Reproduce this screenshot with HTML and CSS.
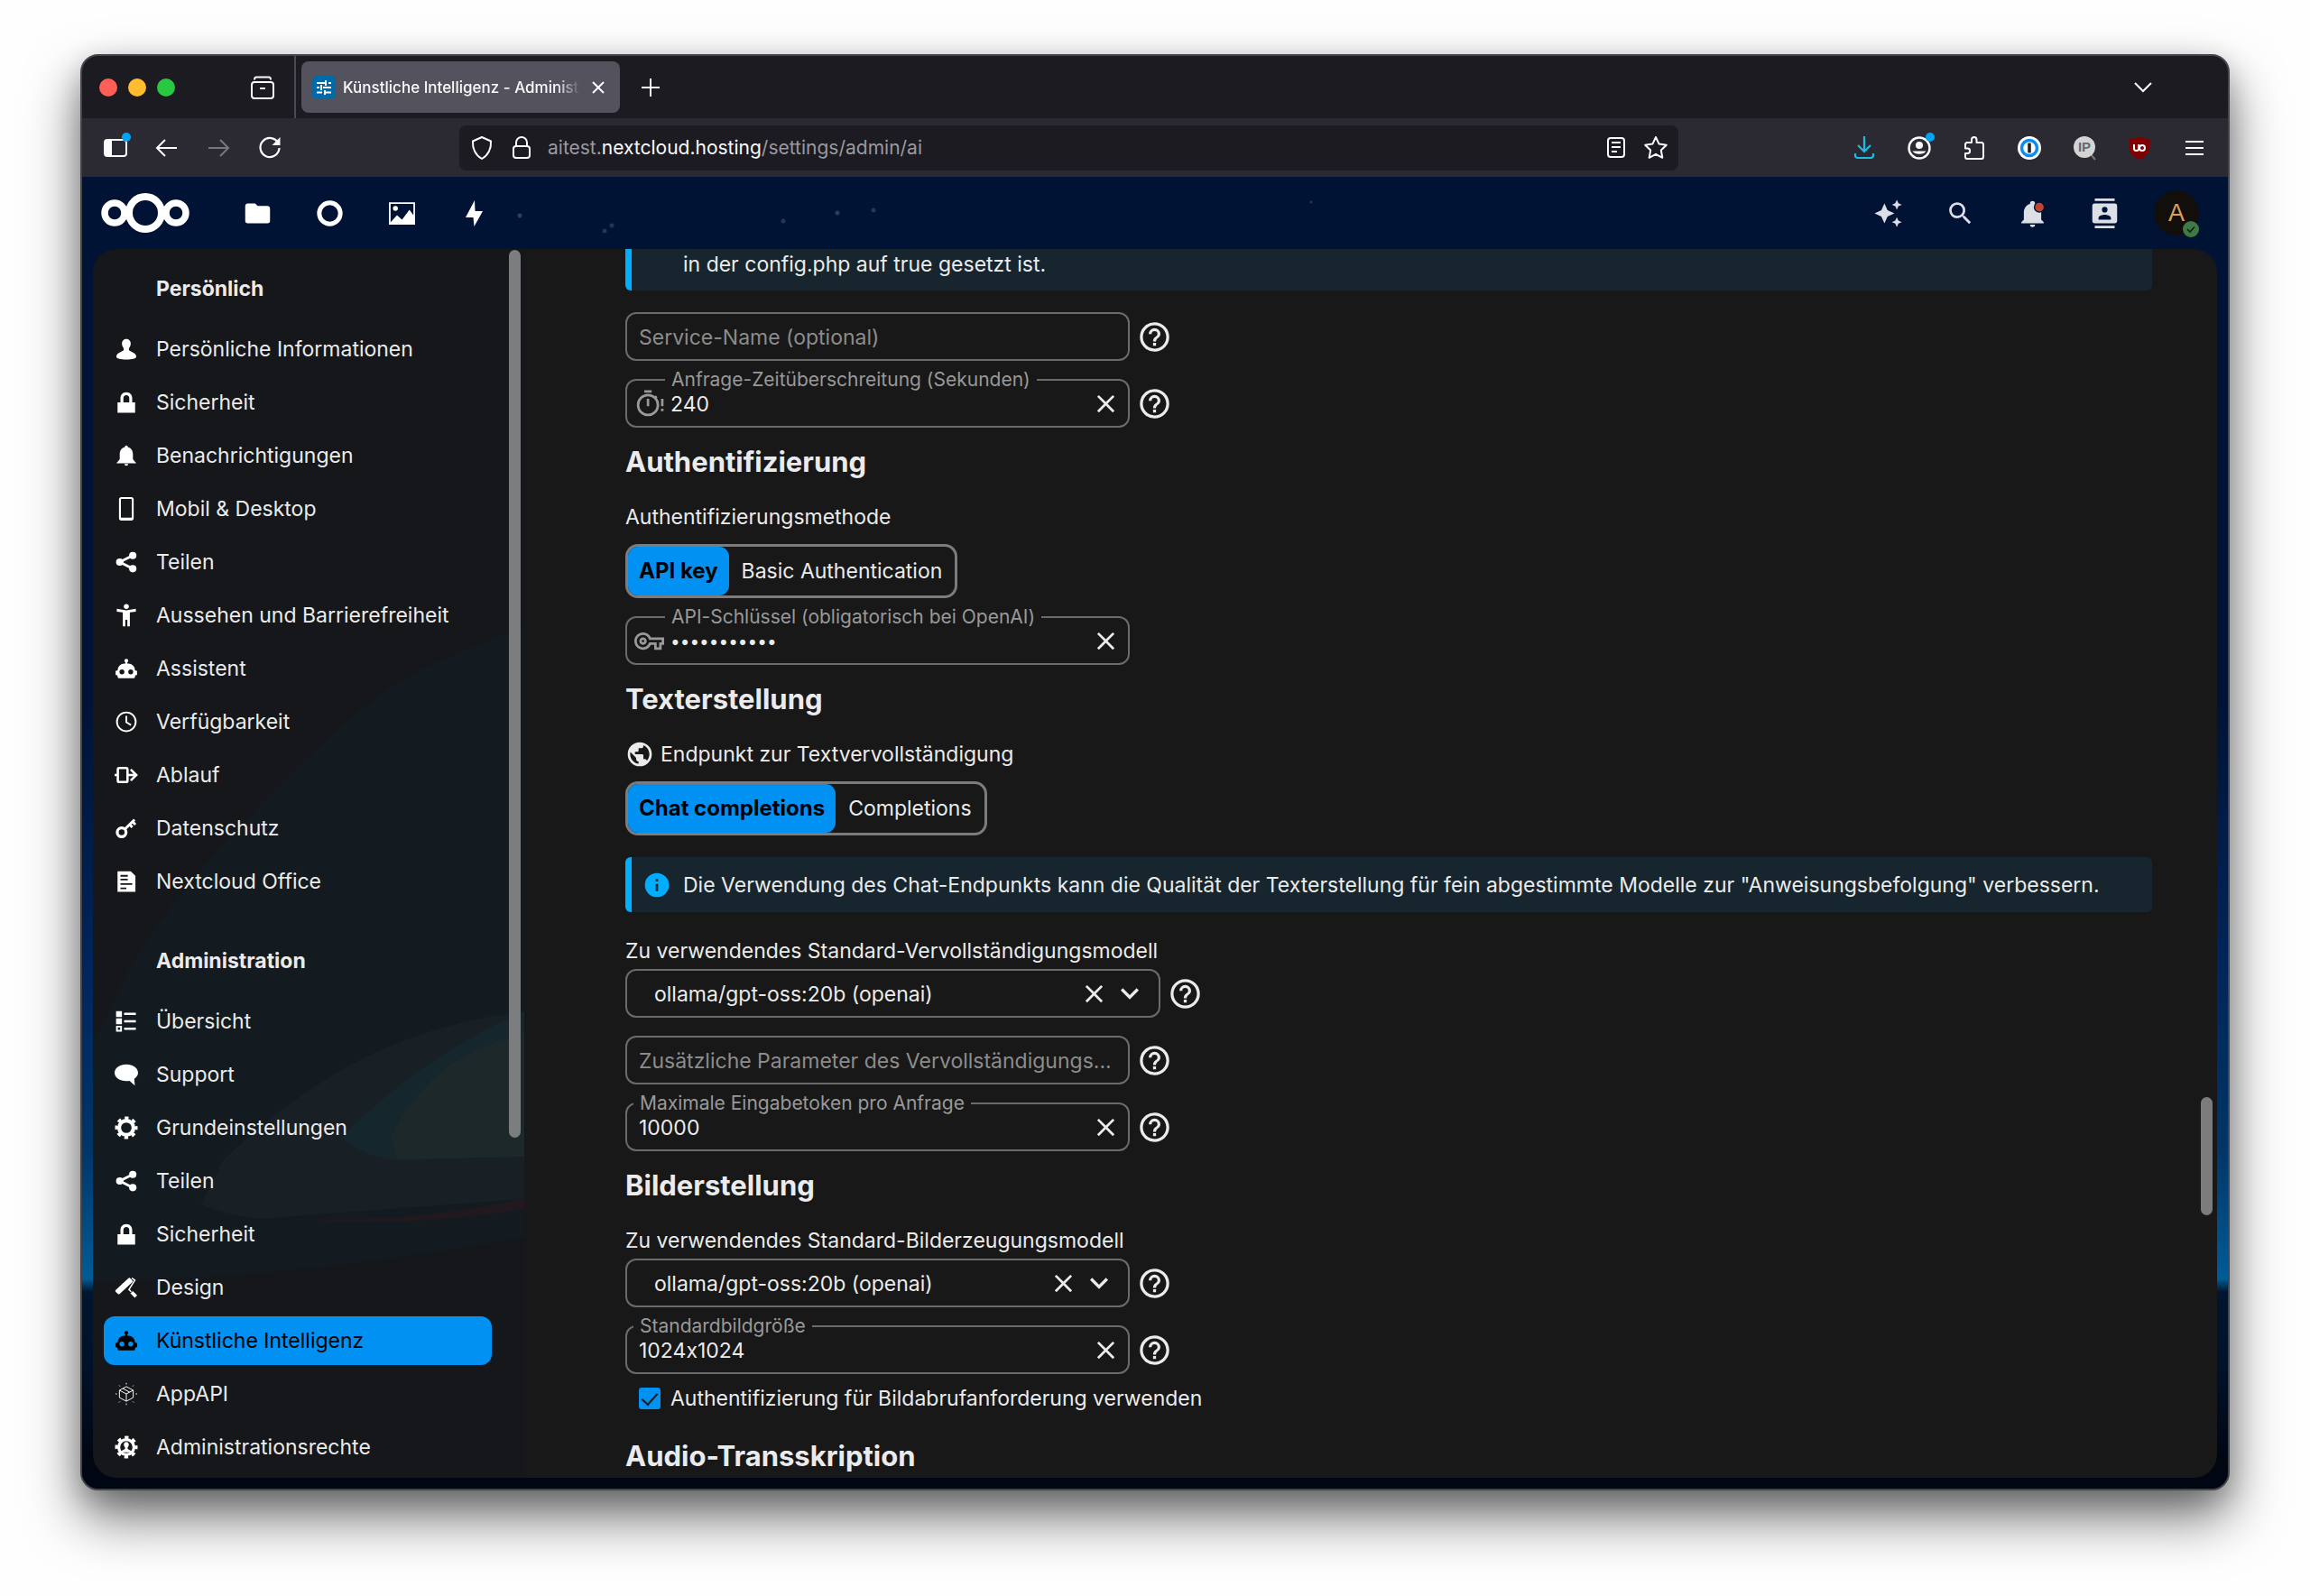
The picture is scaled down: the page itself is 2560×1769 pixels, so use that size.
FILE: index.html
```html
<!DOCTYPE html>
<html lang="de">
<head>
  <meta charset="utf-8">
  <title>Künstliche Intelligenz - Administration</title>
  <link rel="stylesheet" href="styles.css">
</head>
<body>
  <!-- Icon sprite -->
  <svg class="sprite" aria-hidden="true">
    <symbol id="i-close" viewBox="0 0 24 24"><path d="M19 6.41 17.59 5 12 10.59 6.41 5 5 6.41 10.59 12 5 17.59 6.41 19 12 13.41 17.59 19 19 17.59 13.41 12z"/></symbol>
    <symbol id="i-help" viewBox="0 0 24 24"><path d="M11 18h2v-2h-2zm1-16A10 10 0 0 0 2 12a10 10 0 0 0 10 10 10 10 0 0 0 10-10A10 10 0 0 0 12 2m0 18c-4.41 0-8-3.59-8-8s3.59-8 8-8 8 3.59 8 8-3.59 8-8 8m0-14a4 4 0 0 0-4 4h2a2 2 0 0 1 2-2 2 2 0 0 1 2 2c0 2-3 1.75-3 5h2c0-2.25 3-2.5 3-5a4 4 0 0 0-4-4"/></symbol>
    <symbol id="i-chevron" viewBox="0 0 24 24"><path d="M7.41 8.58 12 13.17l4.59-4.59L18 10l-6 6-6-6z"/></symbol>
    <symbol id="i-robot" viewBox="0 0 24 24"><path d="M12 2a2 2 0 0 1 2 2c0 .74-.4 1.39-1 1.73V7h1a7 7 0 0 1 7 7h1a1 1 0 0 1 1 1v3a1 1 0 0 1-1 1h-1v1a2 2 0 0 1-2 2H5a2 2 0 0 1-2-2v-1H2a1 1 0 0 1-1-1v-3a1 1 0 0 1 1-1h1a7 7 0 0 1 7-7h1V5.73c-.6-.34-1-.99-1-1.73a2 2 0 0 1 2-2M7.5 13A2.5 2.5 0 0 0 5 15.5 2.5 2.5 0 0 0 7.5 18a2.5 2.5 0 0 0 2.5-2.5A2.5 2.5 0 0 0 7.5 13m9 0a2.5 2.5 0 0 0-2.5 2.5 2.5 2.5 0 0 0 2.5 2.5 2.5 2.5 0 0 0 2.5-2.5 2.5 2.5 0 0 0-2.5-2.5"/></symbol>
    <symbol id="i-user" viewBox="0 0 16 16"><path d="M8 1C6.300 1 5 2.200 5 4.200c0 1.300.6 2.400 1.200 3.200v1.200C5.500 9.800 1.200 10.300 1.200 13c0 1.400 3 2 6.800 2s6.800-.6 6.800-2c0-2.700-4.300-3.200-5-4.400V7.400C10.400 6.600 11 5.500 11 4.200 11 2.200 9.700 1 8 1"/></symbol>
    <symbol id="i-lock" viewBox="0 0 16 16"><path d="M8 1C5.600 1 4 2.800 4 5v3H2v7h12V8h-2V5c0-2.200-1.600-4-4-4m0 2c1.300 0 2 .9 2 2v3H6V5c0-1.100.7-2 2-2"/></symbol>
    <symbol id="i-bell" viewBox="0 0 16 16"><path d="M8 1C7.300 1 7 1.500 7 2.100 4.900 2.600 3.500 4.400 3.500 7v3.500L1.200 13.200h13.600l-2.300-2.700V7c0-2.600-1.400-4.400-3.500-4.900C9 1.500 8.700 1 8 1M6.700 13.700a1.300 1.300 0 0 0 2.600 0"/></symbol>
    <symbol id="i-phone" viewBox="0 0 16 16"><path fill-rule="evenodd" d="M4.500 0h7c.8 0 1.500.7 1.500 1.500v13c0 .8-.7 1.500-1.500 1.500h-7C3.700 16 3 15.300 3 14.500v-13C3 .7 3.700 0 4.500 0M4.300 1.300V14h7.400V1.300z"/></symbol>
    <symbol id="i-share" viewBox="0 0 16 16"><path d="M3.500 8 12.300 3.500M3.500 8l8.800 4.500" stroke="currentColor" stroke-width="1.800"/><circle cx="3.500" cy="8" r="2.500"/><circle cx="12.400" cy="3.500" r="2.500"/><circle cx="12.400" cy="12.500" r="2.500"/></symbol>
    <symbol id="i-access" viewBox="0 0 16 16"><circle cx="8" cy="2" r="1.700"/><path d="M1.500 3.600 8 4.600l6.500-1v1.900L10.400 6v9.500H8.700V11H7.300v4.500H5.600V6l-4.100-.5z"/></symbol>
    <symbol id="i-clock" viewBox="0 0 16 16"><circle cx="8" cy="8" r="6.400" fill="none" stroke="currentColor" stroke-width="1.200"/><path d="M8 4v4.300l3.200 1.900" fill="none" stroke="currentColor" stroke-width="1.200"/></symbol>
    <symbol id="i-flow" viewBox="0 0 16 16"><path d="M2.200 4.200c0-.6.400-1 1-1h4.600c.6 0 1 .4 1 1v7.600c0 .6-.4 1-1 1H3.200c-.6 0-1-.4-1-1zM0 8h2M9 8h5.500M11 4.200 14.800 8 11 11.800" fill="none" stroke="currentColor" stroke-width="1.600"/></symbol>
    <symbol id="i-key" viewBox="0 0 16 16"><circle cx="4.800" cy="10.800" r="3" fill="none" stroke="currentColor" stroke-width="2"/><path d="m7 8.600 6.600-6.400M10.400 5.600l1.700 1.700M12.200 3.500l2 2" fill="none" stroke="currentColor" stroke-width="1.800"/></symbol>
    <symbol id="i-doc" viewBox="0 0 16 16"><path fill-rule="evenodd" d="M2 1h9l3.200 3.200V15H2zm2 2.600v1.100h5V3.600zm0 2.600v1.100h5V6.200zm0 3v1.100h8V9.200zm0 2.900v1.100h4v-1.100z"/></symbol>
    <symbol id="i-list" viewBox="0 0 16 16"><path fill-rule="evenodd" d="M1 1h4v4H1zM1 6h4v4H1zM1 11h4v4H1zm1.200 1.200v1.600h1.600v-1.600zM6.500 2.200h8v1.500h-8zM6.500 7.200h8v1.500h-8zM6.500 12.300h8v1.500h-8z"/></symbol>
    <symbol id="i-chat" viewBox="0 0 16 16"><path d="M8 1C3.600 1 0 3.400 0 6.800s3.600 5.700 8 5.700c.8 0 1.500 0 2.200-.2L13.800 15.500l-.4-4.600c1.600-1 2.600-2.500 2.600-4.100C16 3.400 12.400 1 8 1"/></symbol>
    <symbol id="i-cog" viewBox="0 0 16 16"><circle cx="8" cy="8" r="4.900" fill="none" stroke="currentColor" stroke-width="2.600"/><circle cx="8" cy="8" r="6.700" fill="none" stroke="currentColor" stroke-width="2" stroke-dasharray="2.630 2.631" stroke-dashoffset="1.315"/></symbol>
    <symbol id="i-cog-user" viewBox="0 0 16 16"><circle cx="8" cy="8" r="5.200" fill="none" stroke="currentColor" stroke-width="2"/><circle cx="8" cy="8" r="6.700" fill="none" stroke="currentColor" stroke-width="2" stroke-dasharray="2.630 2.631" stroke-dashoffset="1.315"/><path d="M8 4.400c-1 0-1.700.8-1.700 1.900 0 .7.300 1.300.8 1.700v1.200c-.4.500-2.300.6-2.600 2.300h7c-.3-1.700-2.200-1.800-2.600-2.300V8c.5-.4.8-1 .8-1.700 0-1.100-.7-1.900-1.700-1.900"/></symbol>
    <symbol id="i-roller" viewBox="0 0 16 16"><path d="M.8 9.700 9.300 1.800c.5-.5 1-.5 1.400 0l1.300 1.300c.4.400.4.900 0 1.300L3.600 12.300c-.5.500-1 .5-1.400 0L.8 11c-.4-.4-.4-.9 0-1.300"/><path d="M11.700 1.600 13.800 3 9.800 9.400l1.500 1.500" fill="none" stroke="currentColor" stroke-width=".9"/><path d="m11.600 11.200 3 3" stroke="currentColor" stroke-width="2.300"/></symbol>
    <symbol id="i-cube" viewBox="0 0 16 16"><path d="m8 3 4.700 2.500v5L8 13l-4.700-2.500v-5zM3.300 5.500 8 8l4.700-2.500M8 8v5M5.600 4.300l4.700 2.500" fill="none" stroke="currentColor" stroke-width=".6"/><path d="M8 .5v1M8 14.500v1M.6 8h1M14.400 8h1M3 2.200l.6.600M13 2.200l-.6.600M3 13.800l.6-.6M13 13.800l-.6-.6" stroke="currentColor" stroke-width=".6"/></symbol>
  </svg>

  <div class="window">
    <!-- Tabs -->
    <div class="tabbar">
      <div class="lights"><span class="light red"></span><span class="light yellow"></span><span class="light green"></span></div>
      <button class="bar-btn archive" aria-label="Tabs">
        <svg width="28" height="28" viewBox="0 0 28 28" fill="none" stroke="#fbfbfe" stroke-width="2"><path d="M5 5.500C5 3 6 2.500 7 2.500h14c1 0 2 .5 2 3"/><rect x="2" y="8" width="24" height="18" rx="3"/><path d="M11 15h6"/></svg>
      </button>
      <div class="tab">
        <svg width="26" height="26" viewBox="0 0 26 26"><rect width="26" height="26" rx="5" fill="#0069a8"/><path d="M5 8h9M18 8h3M15 5v6M5 13h3M12 13h9M10 10v6M5 18.500h6M15 18.500h6M14 16v5" stroke="#fff" stroke-width="2"/></svg>
        <span class="tab-title">Künstliche Intelligenz - Administ</span>
        <button class="bar-btn tab-close" aria-label="Tab schließen"><svg width="14" height="14" viewBox="0 0 14 14" stroke="#fbfbfe" stroke-width="2"><path d="M1 1l12 12M13 1 1 13"/></svg></button>
      </div>
      <button class="bar-btn new-tab" aria-label="Neuer Tab"><svg width="20" height="20" viewBox="0 0 20 20" stroke="#fbfbfe" stroke-width="2"><path d="M10 0v20M0 10h20"/></svg></button>
      <button class="bar-btn all-tabs" aria-label="Alle Tabs"><svg width="20" height="12" viewBox="0 0 20 12" fill="none" stroke="#fbfbfe" stroke-width="2"><path d="M1 1l9 9 9-9"/></svg></button>
    </div>

    <!-- Address bar -->
    <div class="toolbar">
      <div class="tools tools-left">
        <button class="tool" aria-label="Seitenleiste"><svg width="34" height="34" viewBox="0 0 34 34"><rect x="5" y="8" width="24" height="18" rx="3" fill="none" stroke="#fbfbfe" stroke-width="2"/><path d="M6 9h7v16H6z" fill="#fbfbfe"/><circle cx="29" cy="5" r="5" fill="#00a5f5"/></svg></button>
        <button class="tool" aria-label="Zurück"><svg width="34" height="34" viewBox="0 0 34 34" fill="none" stroke="#fbfbfe" stroke-width="2"><path d="M28 17H7M15 8l-9 9 9 9"/></svg></button>
        <button class="tool" aria-label="Vor"><svg width="34" height="34" viewBox="0 0 34 34" fill="none" stroke="#77767e" stroke-width="2"><path d="M6 17h21M19 8l9 9-9 9"/></svg></button>
        <button class="tool" aria-label="Neu laden"><svg width="34" height="34" viewBox="0 0 34 34"><path d="M26.500 12A10.500 10.500 0 1 0 27.500 17" fill="none" stroke="#fbfbfe" stroke-width="2.200"/><path d="M28.500 5v9h-9z" fill="#fbfbfe"/></svg></button>
      </div>
      <div class="urlbar">
        <svg width="34" height="34" viewBox="0 0 34 34" fill="none" stroke="#fbfbfe" stroke-width="2"><path d="M17 5 27 9.500c.6 8-3 15.500-10 19.500C10 25 6.400 17.500 7 9.500z" stroke-linejoin="round"/></svg>
        <svg width="34" height="34" viewBox="0 0 34 34" fill="none" stroke="#fbfbfe" stroke-width="2"><rect x="8" y="15" width="18" height="13" rx="3"/><path d="M11 15v-4a6 6 0 0 1 12 0v4"/></svg>
        <div class="url">aitest.<span class="domain">nextcloud.hosting</span>/settings/admin/ai</div>
        <svg width="34" height="34" viewBox="0 0 34 34" fill="none" stroke="#fbfbfe" stroke-width="2"><rect x="8" y="6" width="18" height="21" rx="3"/><path d="M12 11h10M12 16h10M12 21h6"/></svg>
        <svg width="34" height="34" viewBox="0 0 34 34" fill="none" stroke="#fbfbfe" stroke-width="2" stroke-linejoin="round"><path d="m17 5 3.600 7.600 8.200 1.100-6 5.800 1.500 8.300L17 23.800l-7.300 4 1.500-8.300-6-5.800 8.200-1.100z"/></svg>
      </div>
      <div class="tools tools-right">
        <button class="tool" aria-label="Downloads"><svg width="34" height="34" viewBox="0 0 34 34" fill="none" stroke="#1cbbe0" stroke-width="2.200"><path d="M17 4v16M10 14l7 7 7-7M7 23v2c0 2 1 3 3 3h14c2 0 3-1 3-3v-2"/></svg></button>
        <button class="tool" aria-label="Konto"><svg width="34" height="34" viewBox="0 0 34 34"><circle cx="17" cy="17" r="11.500" fill="none" stroke="#fbfbfe" stroke-width="2.400"/><circle cx="17" cy="14" r="4" fill="#fbfbfe"/><path d="M9.500 20.500h15a8.500 6 0 0 1-15 0" fill="#fbfbfe"/><circle cx="29" cy="5" r="5" fill="#00a5f5"/></svg></button>
        <button class="tool" aria-label="Erweiterungen"><svg width="34" height="34" viewBox="0 0 34 34" fill="none" stroke="#fbfbfe" stroke-width="2" stroke-linejoin="round"><path d="M7 13.500c0-1.500.5-2.500 2-2.500h5V8c0-4 5.500-4 5.500 0v3H25c1.500 0 2 1 2 2.500v13c0 1.500-.5 2.500-2 2.500H9c-1.500 0-2-1-2-2.500V23h2.500c3.500 0 3.500-5.500 0-5.500H7z"/></svg></button>
        <button class="tool" aria-label="Passwörter"><svg width="34" height="34" viewBox="0 0 34 34"><circle cx="17" cy="17" r="13" fill="#fff"/><circle cx="17" cy="17" r="8.500" fill="#fff" stroke="#0a8cf0" stroke-width="3.500"/><rect x="15.200" y="11.500" width="3.600" height="11" rx="1" fill="#222"/></svg></button>
        <button class="tool ip" aria-label="IP"><svg width="34" height="34" viewBox="0 0 34 34"><path d="m24 24 5 6" stroke="#777" stroke-width="2"/><circle cx="17" cy="16" r="12" fill="#d4d4d4"/></svg><span class="ext-text">IP</span></button>
        <button class="tool ub" aria-label="uBlock"><svg width="34" height="34" viewBox="0 0 34 34"><path d="M17 4c4 2.500 7 3 11.500 3v9c0 7-5 10.500-11.500 14C10.500 26.500 5.500 23 5.500 16V7C10 7 13 6.500 17 4" fill="#800000"/><path d="M11 13v4.500a2.600 2.600 0 0 0 5.200 0V13" fill="none" stroke="#fff" stroke-width="2"/><circle cx="20" cy="17" r="3" fill="none" stroke="#fff" stroke-width="2"/></svg></button>
        <button class="tool" aria-label="Menü"><svg width="34" height="34" viewBox="0 0 34 34" stroke="#fbfbfe" stroke-width="2"><path d="M7 10h20M7 17h20M7 24h20"/></svg></button>
      </div>
    </div>

    <!-- Nextcloud -->
    <div class="cloud">
      <header class="header">
        <a href="#" class="logo" aria-label="Nextcloud"><svg width="98" height="46" viewBox="0 0 98 46" fill="none" stroke="#fff"><circle cx="49" cy="23" r="18" stroke-width="8"/><circle cx="15" cy="23" r="11" stroke-width="7.500"/><circle cx="83" cy="23" r="11" stroke-width="7.500"/></svg></a>
        <nav class="apps">
          <a href="#" aria-label="Dateien"><svg width="33" height="33" viewBox="0 0 24 24" fill="#fff"><path d="M10 4H4c-1.110 0-2 .890-2 2v12a2 2 0 0 0 2 2h16a2 2 0 0 0 2-2V8c0-1.110-.9-2-2-2h-8z"/></svg></a>
          <a href="#" aria-label="Übersicht"><svg width="33" height="33" viewBox="0 0 24 24" fill="none" stroke="#fff" stroke-width="3.600"><circle cx="12" cy="12" r="8.500"/></svg></a>
          <a href="#" aria-label="Fotos"><svg width="33" height="33" viewBox="0 0 24 24"><path d="M1.500 3h21v18h-21zm1.300 1.300v15.400h18.400V4.300z" fill="#fff" fill-rule="evenodd"/><circle cx="6.700" cy="8" r="2" fill="#fff"/><path d="M2.500 19.500 8 13.500l4 3.500 6-8 4 5.500v6H2.500z" fill="#fff"/></svg></a>
          <a href="#" aria-label="Aktivität"><svg width="33" height="33" viewBox="0 0 33 33" fill="#fff"><path d="M17 2 7 21h8.500l1 10L26 14h-8.500z"/></svg></a>
        </nav>
        <div class="header-end">
          <button class="hbtn" aria-label="Assistent"><svg width="33" height="33" viewBox="0 0 24 24"><path d="m19 1-1.260 2.750L15 5l2.740 1.260L19 9l1.250-2.740L23 5l-2.750-1.250M9 4 6.500 9.500 1 12l5.500 2.500L9 20l2.500-5.500L17 12l-5.500-2.500M19 15l-1.260 2.740L15 19l2.740 1.250L19 23l1.250-2.750L23 19l-2.750-1.260"/></svg></button>
          <button class="hbtn" aria-label="Suche"><svg width="33" height="33" viewBox="0 0 24 24"><path d="M9.500 3A6.500 6.500 0 0 1 16 9.500c0 1.610-.590 3.090-1.560 4.230l.27.27h.79l5 5-1.500 1.500-5-5v-.79l-.27-.27A6.520 6.520 0 0 1 9.500 16 6.500 6.500 0 0 1 3 9.500 6.500 6.500 0 0 1 9.500 3m0 2C7 5 5 7 5 9.500S7 14 9.500 14 14 12 14 9.500 12 5 9.500 5"/></svg></button>
          <button class="hbtn" aria-label="Benachrichtigungen"><svg width="33" height="33" viewBox="0 0 24 24"><path d="M21 19v1H3v-1l2-2v-6c0-3.100 2.030-5.830 5-6.710V4a2 2 0 0 1 2-2 2 2 0 0 1 2 2v.29c2.970.88 5 3.610 5 6.710v6zm-7 2a2 2 0 0 1-2 2 2 2 0 0 1-2-2"/><circle cx="17.500" cy="7" r="4" fill="#c4452f" stroke="#001335" stroke-width="1"/></svg></button>
          <button class="hbtn" aria-label="Kontakte"><svg width="33" height="33" viewBox="0 0 24 24"><path d="M20 0H4v2h16zM4 24h16v-2H4zM20 4H4a2 2 0 0 0-2 2v12a2 2 0 0 0 2 2h16a2 2 0 0 0 2-2V6a2 2 0 0 0-2-2m-8 2.750A2.250 2.250 0 0 1 14.250 9 2.250 2.250 0 0 1 12 11.250 2.250 2.250 0 0 1 9.750 9 2.250 2.250 0 0 1 12 6.750M17 17H7v-1.500c0-1.670 3.330-2.500 5-2.500s5 .83 5 2.500z"/></svg></button>
          <button class="hbtn avatar" aria-label="Konto"><span class="avatar-letter">A</span><svg class="status" width="18" height="18" viewBox="0 0 18 18"><circle cx="9" cy="9" r="9" fill="#3f7a45"/><path d="m5 9 3 3 5-5.500" fill="none" stroke="#10200f" stroke-width="1.600"/></svg></button>
        </div>
      </header>

      <div class="content">
        <aside class="sidebar">
          <svg class="wallpaper" viewBox="0 0 478 1362" preserveAspectRatio="none" aria-hidden="true">
            <path d="M478 420Q400 445 344 477T184 617 37 804L0 880v265q240-5 478-50z" fill="#131b21"/>
            <path d="M478 845Q390 855 310 892T144 1010l-24 49q50 20 90 14l268-20z" fill="#182026"/>
            <path d="M478 845Q400 880 344 924t-67 61q20 20 60 25l141-4z" fill="#16262d"/>
            <path d="M478 868q-70 22-101 52t-47 65l7 24 141-3z" fill="#1d282b"/>
            <path d="M210 1074q140 8 268-22v12q-130 22-268 10" fill="#21191e"/>
          </svg>
          <nav class="nav">
            <h3 class="nav-title">Persönlich</h3>
            <ul class="nav-list">
              <li><a href="#"><svg class="ico"><use href="#i-user"/></svg>Persönliche Informationen</a></li>
              <li><a href="#"><svg class="ico"><use href="#i-lock"/></svg>Sicherheit</a></li>
              <li><a href="#"><svg class="ico"><use href="#i-bell"/></svg>Benachrichtigungen</a></li>
              <li><a href="#"><svg class="ico"><use href="#i-phone"/></svg>Mobil &amp; Desktop</a></li>
              <li><a href="#"><svg class="ico"><use href="#i-share"/></svg>Teilen</a></li>
              <li><a href="#"><svg class="ico"><use href="#i-access"/></svg>Aussehen und Barrierefreiheit</a></li>
              <li><a href="#"><svg class="ico"><use href="#i-robot"/></svg>Assistent</a></li>
              <li><a href="#"><svg class="ico"><use href="#i-clock"/></svg>Verfügbarkeit</a></li>
              <li><a href="#"><svg class="ico"><use href="#i-flow"/></svg>Ablauf</a></li>
              <li><a href="#"><svg class="ico"><use href="#i-key"/></svg>Datenschutz</a></li>
              <li><a href="#"><svg class="ico"><use href="#i-doc"/></svg>Nextcloud Office</a></li>
            </ul>
            <h3 class="nav-title">Administration</h3>
            <ul class="nav-list">
              <li><a href="#"><svg class="ico"><use href="#i-list"/></svg>Übersicht</a></li>
              <li><a href="#"><svg class="ico"><use href="#i-chat"/></svg>Support</a></li>
              <li><a href="#"><svg class="ico"><use href="#i-cog"/></svg>Grundeinstellungen</a></li>
              <li><a href="#"><svg class="ico"><use href="#i-share"/></svg>Teilen</a></li>
              <li><a href="#"><svg class="ico"><use href="#i-lock"/></svg>Sicherheit</a></li>
              <li><a href="#"><svg class="ico"><use href="#i-roller"/></svg>Design</a></li>
              <li><a href="#" class="active"><svg class="ico"><use href="#i-robot"/></svg>Künstliche Intelligenz</a></li>
              <li><a href="#"><svg class="ico"><use href="#i-cube"/></svg>AppAPI</a></li>
              <li><a href="#"><svg class="ico"><use href="#i-cog-user"/></svg>Administrationsrechte</a></li>
            </ul>
          </nav>
          <div class="nav-scroll"></div>
        </aside>

        <main class="main">
          <div class="note note-cut">in der config.php auf true gesetzt ist.</div>

          <div class="fields">
            <div class="row">
              <div class="field"><input type="text" aria-label="Service-Name" placeholder="Service-Name (optional)"></div>
              <button class="help" aria-label="Hilfe"><svg><use href="#i-help"/></svg></button>
            </div>
            <div class="row">
              <div class="field with-icon">
                <label for="timeout">Anfrage-Zeitüberschreitung (Sekunden)</label>
                <svg class="lead" viewBox="0 0 24 24" fill="none" stroke="currentColor" stroke-width="2"><circle cx="11" cy="13" r="8"/><path d="M8 2h6M11 8v6M16.500 7.500l1.500-1.500M22.500 8v6M22.500 16v2"/></svg>
                <input type="text" id="timeout" value="240">
                <button class="clear" aria-label="Leeren"><svg><use href="#i-close"/></svg></button>
              </div>
              <button class="help" aria-label="Hilfe"><svg><use href="#i-help"/></svg></button>
            </div>
          </div>

          <h2>Authentifizierung</h2>
          <p class="caption">Authentifizierungsmethode</p>
          <div class="segmented">
            <label><input type="radio" name="auth" checked><span>API key</span></label>
            <label><input type="radio" name="auth"><span>Basic Authentication</span></label>
          </div>
          <div class="fields after-segmented">
            <div class="row">
              <div class="field with-icon">
                <label for="apikey">API-Schlüssel (obligatorisch bei OpenAI)</label>
                <svg class="lead" viewBox="0 0 24 24" fill="currentColor"><path d="M22 19h-6v-4h-2.700c-1.100 2.400-3.500 4-6.300 4-3.900 0-7-3.100-7-7s3.100-7 7-7c2.700 0 5.200 1.600 6.300 4H24v6h-2zm-4-2h2v-4h2v-2H11.900l-.2-.7C11 8.300 9.100 7 7 7c-2.800 0-5 2.200-5 5s2.200 5 5 5c2.100 0 4-1.300 4.700-3.300l.2-.7H18zM7 15c-1.700 0-3-1.300-3-3s1.300-3 3-3 3 1.300 3 3-1.300 3-3 3m0-4c-.6 0-1 .4-1 1s.4 1 1 1 1-.4 1-1-.4-1-1-1"/></svg>
                <input type="password" id="apikey" value="abcdefghijk">
                <button class="clear" aria-label="Leeren"><svg><use href="#i-close"/></svg></button>
              </div>
            </div>
          </div>

          <h2>Texterstellung</h2>
          <p class="caption"><svg class="globe" viewBox="0 0 24 24"><path d="M17.900 17.390c-.26-.8-1.010-1.390-1.900-1.390h-1v-3a1 1 0 0 0-1-1H8v-2h2a1 1 0 0 0 1-1V7h2a2 2 0 0 0 2-2v-.41a7.984 7.984 0 0 1 2.900 12.800M11 19.930c-3.950-.49-7-3.850-7-7.930 0-.62.080-1.220.21-1.790L9 15v1a2 2 0 0 0 2 2m1-16A10 10 0 0 0 2 12a10 10 0 0 0 10 10 10 10 0 0 0 10-10A10 10 0 0 0 12 2"/></svg>Endpunkt zur Textvervollständigung</p>
          <div class="segmented">
            <label><input type="radio" name="endpoint" checked><span>Chat completions</span></label>
            <label><input type="radio" name="endpoint"><span>Completions</span></label>
          </div>

          <div class="note">
            <svg class="note-icon" viewBox="0 0 24 24"><path d="M13 9h-2V7h2m0 10h-2v-6h2m-1-9A10 10 0 0 0 2 12a10 10 0 0 0 10 10 10 10 0 0 0 10-10A10 10 0 0 0 12 2"/></svg>
            Die Verwendung des Chat-Endpunkts kann die Qualität der Texterstellung für fein abgestimmte Modelle zur "Anweisungsbefolgung" verbessern.
          </div>

          <label class="select-label" for="text-model">Zu verwendendes Standard-Vervollständigungsmodell</label>
          <div class="fields">
            <div class="row">
              <div class="field select wide">
                <select id="text-model"><option>ollama/gpt-oss:20b (openai)</option></select>
                <button class="clear" aria-label="Leeren"><svg><use href="#i-close"/></svg></button>
                <svg class="arrow"><use href="#i-chevron"/></svg>
              </div>
              <button class="help" aria-label="Hilfe"><svg><use href="#i-help"/></svg></button>
            </div>
            <div class="row">
              <div class="field"><input type="text" aria-label="Zusätzliche Parameter" placeholder="Zusätzliche Parameter des Vervollständigungs..."></div>
              <button class="help" aria-label="Hilfe"><svg><use href="#i-help"/></svg></button>
            </div>
            <div class="row">
              <div class="field">
                <label for="max-tokens">Maximale Eingabetoken pro Anfrage</label>
                <input type="text" id="max-tokens" value="10000">
                <button class="clear" aria-label="Leeren"><svg><use href="#i-close"/></svg></button>
              </div>
              <button class="help" aria-label="Hilfe"><svg><use href="#i-help"/></svg></button>
            </div>
          </div>

          <h2>Bilderstellung</h2>
          <label class="select-label" for="image-model">Zu verwendendes Standard-Bilderzeugungsmodell</label>
          <div class="fields">
            <div class="row">
              <div class="field select">
                <select id="image-model"><option>ollama/gpt-oss:20b (openai)</option></select>
                <button class="clear" aria-label="Leeren"><svg><use href="#i-close"/></svg></button>
                <svg class="arrow"><use href="#i-chevron"/></svg>
              </div>
              <button class="help" aria-label="Hilfe"><svg><use href="#i-help"/></svg></button>
            </div>
            <div class="row">
              <div class="field">
                <label for="image-size">Standardbildgröße</label>
                <input type="text" id="image-size" value="1024x1024">
                <button class="clear" aria-label="Leeren"><svg><use href="#i-close"/></svg></button>
              </div>
              <button class="help" aria-label="Hilfe"><svg><use href="#i-help"/></svg></button>
            </div>
          </div>
          <label class="check"><input type="checkbox" checked>Authentifizierung für Bildabrufanforderung verwenden</label>

          <h2 class="last">Audio-Transskription</h2>
          <div class="main-scroll"></div>
        </main>
      </div>
    </div>
  </div>
</body>
</html>
```
FILE: styles.css
```css
* {
  box-sizing: border-box;
}
body {
  margin: 0;
  padding: 60px 89px 117px;
  background: #fefefe;
  color: #ebebeb;
  font-family: Inter, "Liberation Sans", sans-serif;
  font-size: 23px;
  font-variant-ligatures: no-contextual;
  line-height: 30px;
}
a {
  color: inherit;
  text-decoration: none;
}
button {
  display: flex;
  align-items: center;
  justify-content: center;
  padding: 0;
  border: 0;
  background: none;
}
input, select {
  font: inherit;
  font-variant-ligatures: no-contextual;
  color: inherit;
}
svg {
  flex: none;
}
.sprite {
  position: absolute;
  width: 0;
  height: 0;
}

/* browser window */
.window {
  border: 2px solid #44454a;
  border-radius: 20px;
  background: #1c1b22;
  overflow: hidden;
  box-shadow: 0 30px 60px rgba(0, 0, 0, 0.55), 0 10px 30px rgba(0, 0, 0, 0.2);
}
.tabbar {
  display: flex;
  align-items: center;
  height: 69px;
  padding: 0 84px 0 19px;
}
.lights {
  display: flex;
  gap: 12px;
}
.light {
  width: 20px;
  height: 20px;
  border-radius: 50%;
}
.red {
  background: #ff5f57;
}
.yellow {
  background: #febc2e;
}
.green {
  background: #28c840;
}
.archive {
  height: 69px;
  margin-left: 83px;
  padding-right: 21px;
  border-right: 2px solid #4a4a50;
}
.tab {
  display: flex;
  align-items: center;
  gap: 8px;
  width: 353px;
  height: 57px;
  margin-left: 6px;
  padding: 0 12px;
  border-radius: 8px;
  background: #54525d;
}
.tab-title {
  flex: 1;
  overflow: hidden;
  white-space: nowrap;
  font-size: 17px;
  font-weight: 500;
  color: #fbfbfe;
  mask-image: linear-gradient(90deg, #000 90%, transparent);
}
.tab-close {
  width: 24px;
}
.new-tab {
  margin-left: 24px;
}
.all-tabs {
  margin-left: auto;
}
.toolbar {
  display: flex;
  align-items: center;
  height: 65px;
  padding: 0 20px;
  background: #2b2a33;
}
.tools {
  display: flex;
}
.tools-left {
  gap: 23px;
  width: 398px;
}
.tools-right {
  gap: 27px;
  margin-left: auto;
}
.tool {
  position: relative;
  width: 34px;
  height: 34px;
}
.ext-text {
  position: absolute;
  top: 2px;
  font-size: 15px;
  font-weight: 800;
  line-height: 28px;
  color: #6a6a6a;
}
.urlbar {
  display: flex;
  align-items: center;
  gap: 10px;
  width: 1351px;
  height: 50px;
  padding: 0 8px;
  border-radius: 8px;
  background: #1c1b22;
}
.url {
  flex: 1;
  padding-left: 2px;
  font-size: 21px;
  color: #9a999f;
}
.domain {
  color: #fbfbfe;
}

/* nextcloud shell, the wallpaper shows around the panels */
.cloud {
  padding: 0 12px 12px;
  background:
    linear-gradient(180deg, #001335 0, #001335 40%, #00255a 60%, #003568 74%, #005c96 84%, #00152e 85%, #00132b 90%, #000612 98%, #000612 100%);
}
.header {
  display: flex;
  align-items: center;
  height: 80px;
  padding: 0 20px 0 9px;
  background:
    radial-gradient(circle at 473px 43px, #2c3f63 2px, transparent 3px),
    radial-gradient(circle at 567px 60px, #22355a 2px, transparent 3px),
    radial-gradient(circle at 575px 54px, #22355a 2px, transparent 3px),
    radial-gradient(circle at 765px 49px, #22355a 2px, transparent 3px),
    radial-gradient(circle at 825px 40px, #2c3f63 2px, transparent 3px),
    radial-gradient(circle at 865px 37px, #22355a 2px, transparent 3px),
    radial-gradient(circle at 1350px 28px, #22355a 1px, transparent 2px);
}
.logo {
  display: flex;
}
.apps {
  display: flex;
  margin-left: 35px;
}
.apps a {
  display: flex;
  justify-content: center;
  width: 80px;
}
.header-end {
  display: flex;
  gap: 30px;
  margin-left: auto;
}
.hbtn {
  width: 50px;
  height: 50px;
  fill: #dcdfe6;
}
.avatar {
  position: relative;
  border-radius: 50%;
  background: #120e0c;
}
.avatar-letter {
  font-size: 27px;
  color: #d7a05c;
}
.status {
  position: absolute;
  right: 0;
  bottom: -2px;
}
.content {
  display: flex;
  border-radius: 26px;
  overflow: hidden;
}

/* navigation */
.sidebar {
  position: relative;
  display: flex;
  gap: 19px;
  flex: none;
  width: 478px;
  padding-left: 12px;
  background: #15171a;
}
.wallpaper {
  position: absolute;
  top: 0;
  left: 0;
  width: 100%;
  height: 100%;
}
.nav {
  position: relative;
  width: 430px;
}
.nav-title {
  margin: 0;
  padding: 29px 0 22px 58px;
  font-size: 23px;
  line-height: 30px;
}
.nav-list + .nav-title {
  padding-top: 46px;
}
.nav-list {
  display: flex;
  flex-direction: column;
  gap: 5px;
  margin: 0;
  padding: 3px 0 0;
  list-style: none;
}
.nav-list a {
  display: flex;
  align-items: center;
  gap: 20px;
  height: 54px;
  padding-left: 12px;
  border-radius: 12px;
}
.ico {
  width: 26px;
  height: 26px;
  fill: currentColor;
  color: #fff;
}
.nav-list .active {
  background: #0091f2;
  color: #000;
}
.active .ico {
  color: #000;
}
.nav-scroll {
  position: relative;
  width: 13px;
  height: 984px;
  margin-top: 1px;
  border-radius: 7px;
  background: #7c7d7e;
}

/* settings page */
.main {
  position: relative;
  flex: 1;
  padding: 0 72px 4px 112px;
  background: #181818;
}
.main-scroll {
  position: absolute;
  top: 69%;
  right: 5px;
  width: 13px;
  height: 131px;
  border-radius: 7px;
  background: #7c7c7c;
}
h2 {
  margin: 18px 0 26px;
  font-size: 31px;
  line-height: 40px;
}
.last {
  margin: 29px 0 0;
}
.caption {
  display: flex;
  align-items: center;
  gap: 7px;
  height: 30px;
  margin: 0 0 15px;
}
.globe {
  width: 32px;
  height: 32px;
  fill: #ebebeb;
}
.note {
  display: flex;
  align-items: center;
  gap: 13px;
  min-height: 61px;
  margin: 24px 0 28px;
  padding: 0 12px;
  border-left: 7px solid #00aeff;
  border-radius: 6px;
  background: #17262e;
}
.note-cut {
  align-items: flex-start;
  min-height: 46px;
  margin: 0 0 24px;
  padding: 2px 12px 14px 57px;
  border-top-left-radius: 0;
  border-top-right-radius: 0;
}
.note-icon {
  width: 32px;
  height: 32px;
  fill: #00aeff;
}
.fields {
  display: flex;
  flex-direction: column;
  gap: 20px;
}
.after-segmented {
  margin-top: 20px;
}
.row {
  display: flex;
  align-items: center;
  gap: 8px;
}
.field {
  position: relative;
  display: flex;
  align-items: center;
  width: 559px;
  height: 54px;
  border: 2px solid #6b6b6b;
  border-radius: 12px;
}
.field.wide {
  width: 593px;
}
.field input,
.field select {
  flex: 1;
  min-width: 0;
  height: 50px;
  padding: 2px 13px 0;
  border: 0;
  outline: 0;
  background: none;
  appearance: none;
}
.field input::placeholder {
  color: #8c8c8c;
  opacity: 1;
}
.field input[type="password"] {
  font-size: 19px;
}
.field label {
  position: absolute;
  top: -15px;
  left: 7px;
  padding: 0 7px;
  background: #181818;
  color: #999;
  font-size: 21px;
  line-height: 28px;
}
.field.with-icon label {
  left: 42px;
}
.field.with-icon input {
  padding-left: 7px;
}
.lead {
  width: 33px;
  height: 33px;
  margin-left: 8px;
  color: #999;
}
.clear {
  width: 50px;
  height: 50px;
}
.clear svg {
  width: 33px;
  height: 33px;
  fill: #ebebeb;
}
.field.select select {
  padding-left: 30px;
}
.select .clear {
  width: 40px;
}
.arrow {
  width: 40px;
  height: 40px;
  margin-right: 12px;
  fill: #ebebeb;
}
.help svg {
  width: 39px;
  height: 39px;
  fill: #ebebeb;
}
.segmented {
  display: flex;
  width: fit-content;
  height: 60px;
  border: 3px solid #7c7c7c;
  border-radius: 14px;
}
.segmented label {
  position: relative;
  display: flex;
}
.segmented input {
  position: absolute;
  margin: 0;
  opacity: 0;
}
.segmented span {
  display: flex;
  align-items: center;
  padding: 0 14px;
  border-radius: 11px;
}
.segmented input:checked + span {
  padding: 0 12px;
  background: #0091f2;
  color: #000;
  font-size: 24px;
  font-weight: 700;
}
.select-label {
  display: block;
  margin-bottom: 5px;
}
.check {
  display: flex;
  align-items: center;
  gap: 11px;
  margin: 12px 0 0 15px;
}
.check input {
  display: flex;
  justify-content: center;
  width: 24px;
  height: 24px;
  margin: 0;
  border-radius: 3px;
  background: #0091f2;
  appearance: none;
}
.check input::after {
  content: "";
  width: 8px;
  height: 15px;
  margin-top: 2px;
  border: solid #10151a;
  border-width: 0 2px 2px 0;
  transform: rotate(42deg);
}
```
